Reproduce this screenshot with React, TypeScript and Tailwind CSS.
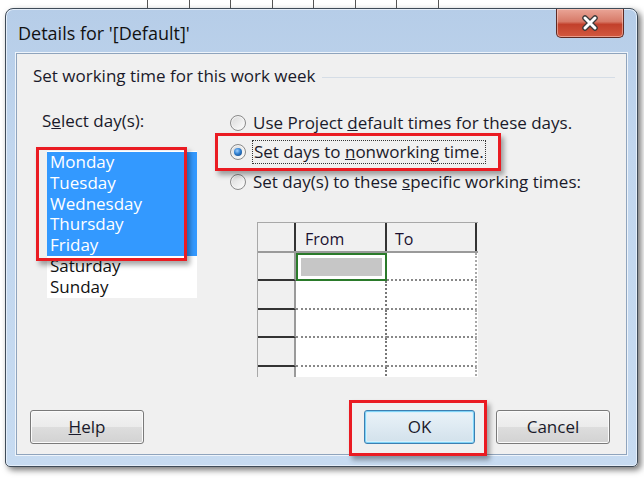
import React from 'react';

const days = ['Monday', 'Tuesday', 'Wednesday', 'Thursday', 'Friday', 'Saturday', 'Sunday'];

function Radio({ checked }: { checked?: boolean }) {
  return (
    <span className="w-[16px] h-[16px] rounded-full border border-[#8a8a8a] bg-gradient-to-br from-[#d8d8d8] to-[#ffffff] flex items-center justify-center shrink-0 shadow-[inset_0_0_0_1px_#f4f4f4]">
      {checked && (
        <span className="w-[8px] h-[8px] rounded-full bg-[radial-gradient(circle_at_40%_35%,#9fd0ff_0%,#2f7fd0_45%,#123c70_100%)]" />
      )}
    </span>
  );
}

function Btn({ children, primary }: { children: React.ReactNode; primary?: boolean }) {
  return (
    <button
      className={
        primary
          ? 'w-[111px] h-[34px] rounded-[3px] border border-[#3c7fb1] bg-gradient-to-b from-[#eaf3f9] to-[#d2e1eb] shadow-[inset_0_0_0_1px_#7fd3f7,inset_0_0_0_2px_#d6f0fc] text-[17px] text-[#1a1a2a]'
          : 'w-[114px] h-[34px] rounded-[3px] border border-[#7a7a7a] bg-[linear-gradient(to_bottom,#f4f4f4_0%,#ebebeb_50%,#dddddd_51%,#d2d2d2_100%)] shadow-[inset_0_0_0_1px_#fbfbfb] text-[17px] text-[#1a1a2a]'
      }
    >
      {children}
    </button>
  );
}

export default function App() {
  return (
    <div
      className="w-[644px] h-[478px] bg-white overflow-hidden text-[#1a1a2a]"
      style={{ fontFamily: '"Open Sans", "Noto Sans", sans-serif' }}
    >
      {/* app behind the dialog */}
      <div className="h-[8px] flex pl-[147px] gap-[40.5px]">
        {[0, 1, 2, 3, 4, 5, 6, 7].map((i) => (
          <div key={i} className="w-px h-full bg-[#555]" />
        ))}
      </div>

      <div className="pl-[5px]">
        <div className="w-[633px] h-[459px] rounded-t-[8px] rounded-b-[5px] border border-[#3f4b58] bg-[linear-gradient(to_bottom,#b6cde8_0%,#c1d6ee_30%,#c7dbf1_100%)] shadow-[3px_3px_6px_rgba(0,0,0,0.55),inset_0_0_0_1px_#e4eefa] flex flex-col">
          {/* title bar */}
          <div className="h-[44px] flex items-start justify-between pl-[12px]">
            <span className="mt-[12px] text-[18px] leading-[24px] text-[#111]">Details for '[Default]'</span>
            <button className="mr-[13px] w-[68px] h-[29px] rounded-b-[5px] border border-t-0 border-[#5e2a24] bg-[linear-gradient(to_bottom,#eaa597_0%,#d77a68_45%,#c2402b_55%,#d2583f_100%)] shadow-[inset_0_0_0_1px_rgba(255,220,210,0.5)] flex items-center justify-center">
              <svg width="18" height="16" viewBox="0 0 18 16">
                <path d="M4 3 L14 13 M14 3 L4 13" stroke="#3a3a3a" strokeWidth="5.5" strokeLinecap="round" />
                <path d="M4 3 L14 13 M14 3 L4 13" stroke="#ffffff" strokeWidth="3" strokeLinecap="round" />
              </svg>
            </button>
          </div>

          {/* client area */}
          <div className="mx-[10px] mb-[11px] flex-1 border border-[#8fa4bd] bg-[#f0f0f0] shadow-[0_0_0_1px_#eef4fb] flex flex-col">
            <div className="mt-[11px] pl-[16px] pr-[11px] flex items-center">
              <span className="text-[17px] leading-[22px]">Set working time for this work week</span>
              <div className="flex-1 h-px bg-[#d5dde6] ml-[6px] mt-[2px]" />
            </div>

            <div className="mt-[21px] flex">
              {/* days */}
              <div className="w-[213px] pl-[25px] flex flex-col">
                <span className="mt-[2px] text-[17px] leading-[22px]">
                  S<span className="underline">e</span>lect day(s):
                </span>
                <div className="relative mt-[19px] ml-[5px] w-[150px] h-[147px] bg-white pt-px">
                  {days.map((d, i) => (
                    <div
                      key={d}
                      className={
                        i < 5
                          ? 'h-[20.8px] leading-[20.8px] pl-[3px] text-[17px] bg-[#3399ff] text-white'
                          : 'h-[20.8px] leading-[20.8px] pl-[3px] text-[17px] text-[#111]'
                      }
                    >
                      {d}
                    </div>
                  ))}
                  <div className="absolute left-[-11px] top-[-4px] w-[151px] h-[114px] border-[3px] border-[#ea1b22] shadow-[3px_4px_5px_rgba(0,0,0,0.35)]" />
                </div>
              </div>

              {/* options */}
              <div className="flex flex-col">
                <div className="h-[29.5px] flex items-center gap-[7px] text-[17px]">
                  <Radio />
                  <span>
                    Use Project <span className="underline">d</span>efault times for these days.
                  </span>
                </div>
                <div className="relative h-[29.5px] flex items-center gap-[6px] text-[17px]">
                  <Radio checked />
                  <span className="border border-dotted border-[#333] px-px leading-[22px]">
                    Set days to <span className="underline">n</span>onworking time.
                  </span>
                  <div className="absolute left-[-15px] top-[-5px] w-[286px] h-[38px] border-[3px] border-[#ea1b22] shadow-[3px_4px_5px_rgba(0,0,0,0.35)]" />
                </div>
                <div className="h-[29.5px] flex items-center gap-[7px] text-[17px]">
                  <Radio />
                  <span>
                    Set day(s) to these <span className="underline">s</span>pecific working times:
                  </span>
                </div>

                {/* grid */}
                <div className="mt-[25px] ml-[27px] w-[221px] h-[155px] overflow-hidden bg-white border-t border-l border-[#a8a8a8] text-[16px]">
                  <div className="flex h-[30px] bg-[#f0f0f0] border-b-2 border-[#9a9a9a]">
                    <div className="w-[38px] border-r-2 border-[#333]" />
                    <div className="w-[91px] border-r-2 border-[#333] pl-[9px] pt-[5px] font-medium leading-[22px] text-[#1a1030]">From</div>
                    <div className="w-[90px] border-r-2 border-[#333] pl-[8px] pt-[5px] font-medium leading-[22px] text-[#1a1030]">To</div>
                  </div>
                  {[0, 1, 2, 3, 4].map((r) => (
                    <div key={r} className="flex h-[28.6px]">
                      <div className="w-[38px] bg-[#f0f0f0] border-r-2 border-[#9a9a9a] border-b-2 border-b-[#333]" />
                      {r === 0 ? (
                        <div className="w-[91px] border-2 border-[#2a7a2a] p-[3px] bg-white">
                          <div className="w-full h-full bg-[#c6c6c6]" />
                        </div>
                      ) : (
                        <div className="w-[91px] border-r-2 border-dotted border-r-[#777] border-b-2 border-b-[#888]" />
                      )}
                      <div className="w-[90px] border-r-2 border-[#a8a8a8] border-b-2 border-dotted border-b-[#888]" />
                    </div>
                  ))}
                </div>
              </div>
            </div>

            {/* buttons */}
            <div className="mt-auto mb-[10px] flex pl-[13px] pr-[16px]">
              <Btn>
                <span className="underline">H</span>elp
              </Btn>
              <div className="flex-1" />
              <div className="relative">
                <Btn primary>OK</Btn>
                <div className="absolute left-[-15px] top-[-10px] w-[138px] h-[56px] border-[3px] border-[#ea1b22] shadow-[3px_4px_5px_rgba(0,0,0,0.35)]" />
              </div>
              <div className="w-[21px]" />
              <Btn>Cancel</Btn>
            </div>
          </div>
        </div>
      </div>
    </div>
  );
}
